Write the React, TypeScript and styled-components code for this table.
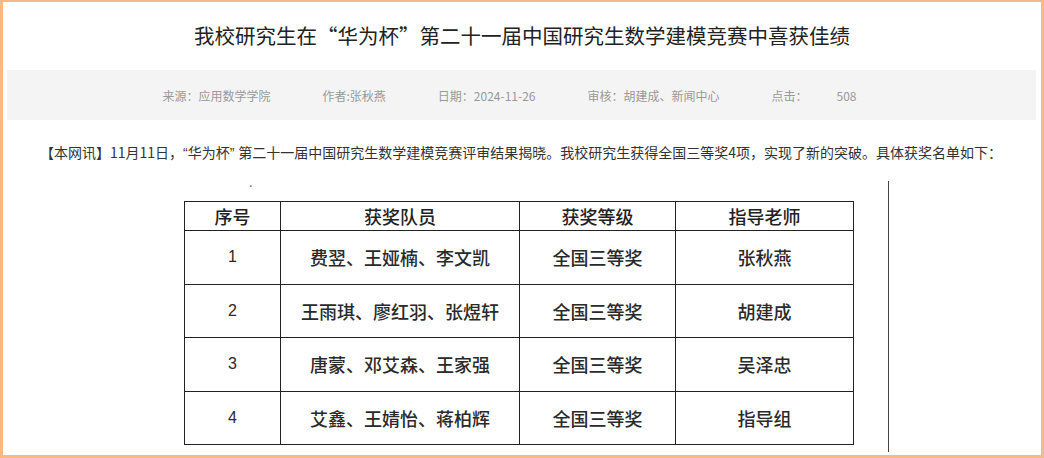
import React from "react";
import styled, { createGlobalStyle } from "styled-components";

const Global = createGlobalStyle`
  html, body { margin: 0; padding: 0; background: #fff; }
  body { font-family: "Noto Sans CJK SC", "Noto Sans", sans-serif; }
`;

const Frame = styled.div`
  box-sizing: border-box;
  width: 1044px;
  height: 458px;
  border-style: solid;
  border-color: #f6b987;
  border-width: 2px 3px 3px 3px;
  display: flex;
  flex-direction: column;
  overflow: hidden;
`;

const Title = styled.h1`
  margin: 0;
  height: 68px;
  display: flex;
  align-items: center;
  justify-content: center;
  font-size: 20.5px;
  font-weight: 400;
  color: #222;
  padding-bottom: 2px;
  box-sizing: border-box;
`;

const MetaBar = styled.div`
  margin: 0 5px 0 4px;
  height: 50px;
  box-sizing: border-box;
  padding: 16px 24px 14px 0;
  background: #f4f4f4;
  display: flex;
  justify-content: center;
  gap: 52px;
  font-size: 12px;
  line-height: 20px;
  color: #999;
`;

const MetaItem = styled.span`
  white-space: nowrap;
`;

const Count = styled.span`
  margin-left: 29px;
`;

const Lead = styled.p`
  margin: 20px 0 0 37px;
  font-size: 14px;
  line-height: 24px;
  color: #333;
  white-space: nowrap;
`;

const Quote = styled.span`
  font-family: "Liberation Sans", Arial, sans-serif;
`;

const Body = styled.div`
  flex: 1;
  display: flex;
  margin-top: 10px;
`;

const Main = styled.div`
  width: 885px;
  display: flex;
  flex-direction: column;
`;

const DotLine = styled.div`
  height: 26px;
  padding-left: 246px;
  font-size: 12px;
  line-height: 14px;
  color: #666;
`;

const Divider = styled.div`
  margin: 6px 0 3px;
  border-left: 1px solid #444;
  width: 0;
`;

const Table = styled.table`
  margin-left: 181px;
  border-collapse: collapse;
  width: 665px;
  table-layout: fixed;
  color: #222;
  font-size: 18px;
`;

const HeadCell = styled.th<{ w: number }>`
  width: ${(p) => p.w}px;
  height: 28px;
  padding: 0;
  border: 1px solid #222;
  font-weight: 500;
  text-align: center;
  line-height: 24px;
`;

const Cell = styled.td<{ num?: boolean }>`
  height: 52.5px;
  padding: 0;
  border: 1px solid #222;
  text-align: center;
  font-weight: ${(p) => (p.num ? 400 : 500)};
  font-family: ${(p) =>
    p.num ? '"Liberation Sans", Arial, sans-serif' : '"Noto Sans CJK SC", sans-serif'};
  font-size: ${(p) => (p.num ? "16px" : "18px")};
  color: #2a2a2a;
`;

const rows = [
  ["1", "费翌、王娅楠、李文凯", "全国三等奖", "张秋燕"],
  ["2", "王雨琪、廖红羽、张煜轩", "全国三等奖", "胡建成"],
  ["3", "唐蒙、邓艾森、王家强", "全国三等奖", "吴泽忠"],
  ["4", "艾鑫、王婧怡、蒋柏辉", "全国三等奖", "指导组"],
];

export default function App() {
  return (
    <>
      <Global />
      <Frame>
        <Title>我校研究生在“华为杯”第二十一届中国研究生数学建模竞赛中喜获佳绩</Title>
        <MetaBar>
          <MetaItem>来源：应用数学学院</MetaItem>
          <MetaItem>作者:张秋燕</MetaItem>
          <MetaItem>日期：2024-11-26</MetaItem>
          <MetaItem>审核：胡建成、新闻中心</MetaItem>
          <MetaItem>
            点击：<Count>508</Count>
          </MetaItem>
        </MetaBar>
        <Lead>
          【本网讯】11月11日，<Quote>“</Quote>华为杯<Quote>” </Quote>第二十一届中国研究生数学建模竞赛评审结果揭晓。我校研究生获得全国三等奖4项，实现了新的突破。具体获奖名单如下：
        </Lead>
        <Body>
          <Main>
            <DotLine>.</DotLine>
            <Table>
              <thead>
                <tr>
                  <HeadCell w={95}>序号</HeadCell>
                  <HeadCell w={238}>获奖队员</HeadCell>
                  <HeadCell w={155}>获奖等级</HeadCell>
                  <HeadCell w={177}>指导老师</HeadCell>
                </tr>
              </thead>
              <tbody>
                {rows.map((r) => (
                  <tr key={r[0]}>
                    <Cell num>{r[0]}</Cell>
                    <Cell>{r[1]}</Cell>
                    <Cell>{r[2]}</Cell>
                    <Cell>{r[3]}</Cell>
                  </tr>
                ))}
              </tbody>
            </Table>
          </Main>
          <Divider />
        </Body>
      </Frame>
    </>
  );
}
